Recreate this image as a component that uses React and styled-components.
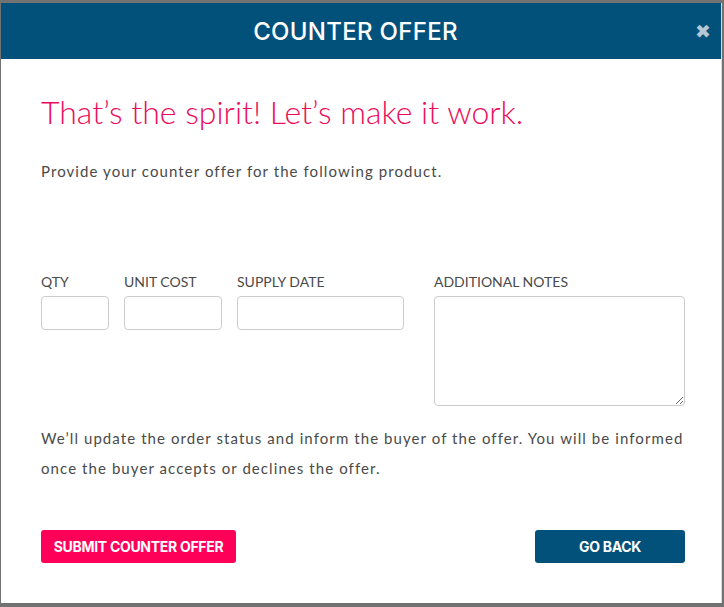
import React from "react";
import styled, { createGlobalStyle } from "styled-components";

const GlobalStyle = createGlobalStyle`
  html, body {
    margin: 0;
    padding: 0;
    background: #727272;
  }
  * { box-sizing: border-box; }
`;

const Modal = styled.div`
  margin: 3px 0 0 1px;
  width: 721px;
  height: 600px;
  background: #ffffff;
  border-right: 1px solid #d8d8d8;
  display: flex;
  flex-direction: column;
`;

const Header = styled.header`
  position: relative;
  height: 56px;
  padding-right: 11px;
  background: #02517b;
  display: flex;
  align-items: center;
  justify-content: center;
`;

const Title = styled.h1`
  margin: 0;
  font-family: "Inter", "Open Sans", sans-serif;
  font-weight: 500;
  font-size: 24px;
  letter-spacing: 0.3px;
  color: #ffffff;
`;

const Close = styled.button`
  position: absolute;
  right: 10px;
  top: 50%;
  transform: translateY(-50%);
  border: 0;
  background: transparent;
  color: #b4c8d6;
  font-family: "DejaVu Sans", sans-serif;
  font-weight: 700;
  font-size: 19px;
  line-height: 1;
  padding: 0;
  cursor: pointer;
`;

const Body = styled.div`
  padding: 34px 36px 0 40px;
  display: flex;
  flex-direction: column;
  font-family: "Lato", sans-serif;
`;

const Headline = styled.h2`
  margin: 0;
  font-family: "Lato", sans-serif;
  font-weight: 300;
  font-size: 32px;
  line-height: 38px;
  color: #ec0c5a;
`;

const Text = styled.p`
  margin: ${(p) => p.$mt || 0} 0 0;
  font-size: 15px;
  line-height: ${(p) => p.$lh || "22px"};
  letter-spacing: 1.08px;
  color: #4a4a4a;
`;

const FormRow = styled.div`
  margin-top: 92px;
  display: flex;
  align-items: flex-start;
`;

const Field = styled.label`
  display: flex;
  flex-direction: column;
  gap: 6px;
  margin-right: ${(p) => p.$mr || "15px"};
`;

const Label = styled.span`
  font-size: 14px;
  line-height: 16px;
  color: #4a4a4a;
  text-transform: uppercase;
`;

const Input = styled.input`
  width: ${(p) => p.$w};
  height: 34px;
  border: 1px solid #cccccc;
  border-radius: 4px;
  padding: 6px 8px;
  font-family: "Lato", sans-serif;
  font-size: 14px;
  outline: none;
`;

const TextArea = styled.textarea`
  width: 251px;
  height: 110px;
  border: 1px solid #cccccc;
  border-radius: 4px;
  padding: 6px 8px;
  font-family: "Lato", sans-serif;
  font-size: 14px;
  outline: none;
`;

const Actions = styled.div`
  margin-top: 47px;
  display: flex;
  justify-content: space-between;
`;

const Button = styled.button`
  height: 33px;
  width: ${(p) => p.$w};
  border: 0;
  border-radius: 3px;
  background: ${(p) => (p.$primary ? "#ff0059" : "#02517b")};
  color: #ffffff;
  font-family: "Inter", "Open Sans", sans-serif;
  font-weight: 700;
  font-size: 14px;
  letter-spacing: -0.3px;
  text-transform: uppercase;
  cursor: pointer;
`;

export default function App() {
  return (
    <>
      <GlobalStyle />
      <Modal>
        <Header>
          <Title>COUNTER OFFER</Title>
          <Close aria-label="Close">✖</Close>
        </Header>
        <Body>
          <Headline>That’s the spirit! Let’s make it work.</Headline>
          <Text $mt="29px">Provide your counter offer for the following product.</Text>
          <FormRow>
            <Field>
              <Label>Qty</Label>
              <Input $w="68px" />
            </Field>
            <Field>
              <Label>Unit Cost</Label>
              <Input $w="98px" />
            </Field>
            <Field $mr="30px">
              <Label>Supply Date</Label>
              <Input $w="167px" />
            </Field>
            <Field $mr="0">
              <Label>Additional Notes</Label>
              <TextArea />
            </Field>
          </FormRow>
          <Text $mt="17px" $lh="30px">
            We’ll update the order status and inform the buyer of the offer. You will be informed once the buyer accepts or declines the offer.
          </Text>
          <Actions>
            <Button $primary $w="195px">Submit Counter Offer</Button>
            <Button $w="150px">Go Back</Button>
          </Actions>
        </Body>
      </Modal>
    </>
  );
}
